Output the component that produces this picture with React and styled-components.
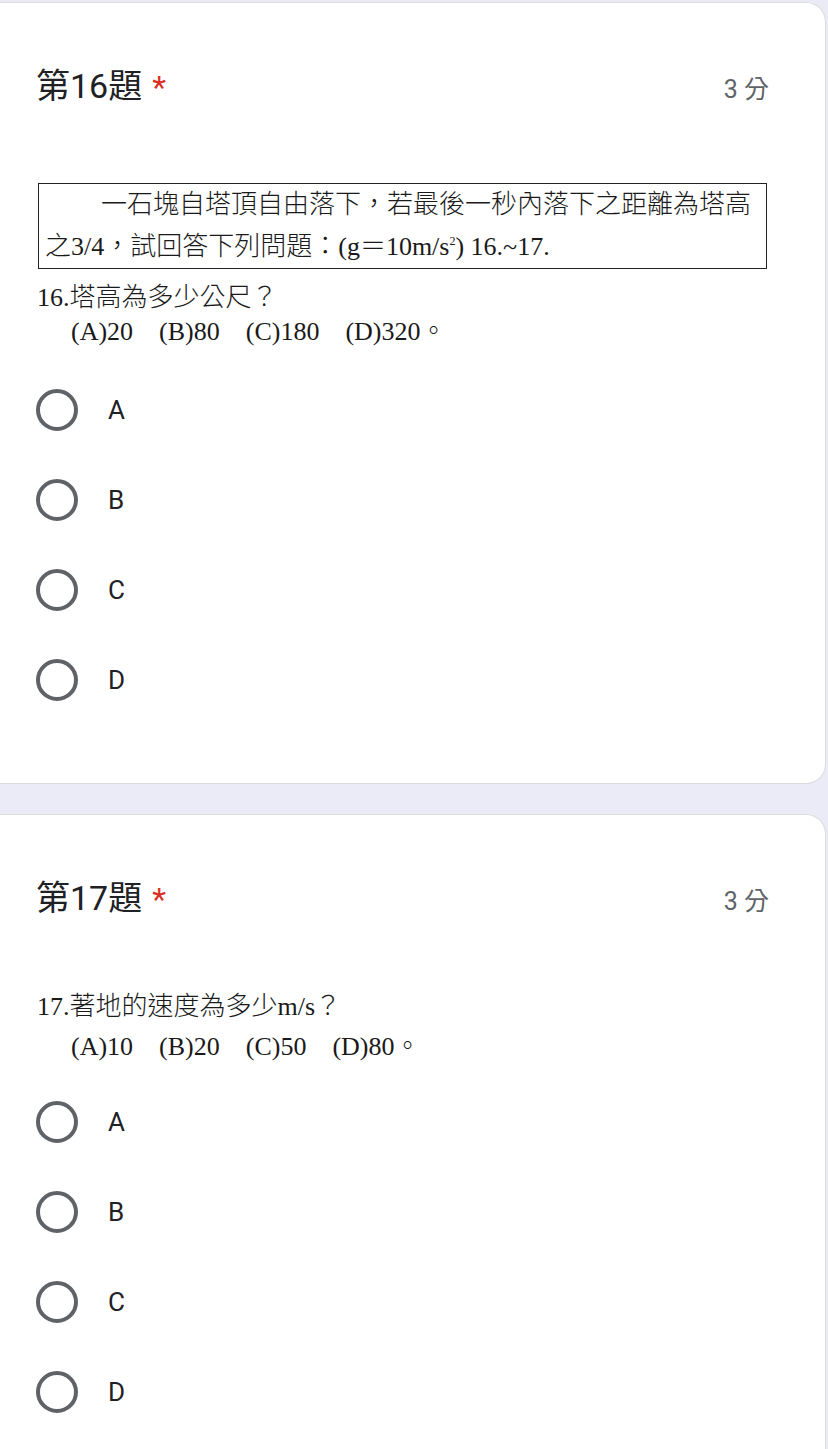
import styled, { createGlobalStyle } from 'styled-components'

const GlobalStyle = createGlobalStyle`
  body {
    margin: 0;
    background: #ebebf7;
    font-family: Roboto, "Noto Sans CJK TC", sans-serif;
  }
`

const Page = styled.div`
  display: flex;
  flex-direction: column;
  gap: 30px;
  padding: 2px 2px 0 0;
`

const Card = styled.section`
  background: #fff;
  border: 1px solid #dadce0;
  border-left: none;
  border-radius: 0 20px 20px 0;
  padding: 63px 56px 58px 36px;
`

const Header = styled.div`
  display: flex;
  justify-content: space-between;
  align-items: baseline;
`

const Title = styled.h2`
  margin: 0;
  font-size: 34px;
  line-height: 40px;
  font-weight: 400;
  color: #202124;
`

const Required = styled.span`
  color: #d93025;
  margin-left: 10px;
  font-size: 32px;
`

const Points = styled.span`
  font-size: 25px;
  color: #5f6368;
`

// scanned question picture, kept as text
const Scan = styled.div`
  margin-top: ${p => p.$top}px;
  font-family: "Liberation Serif", "Noto Sans CJK TC", serif;
  font-size: 26px;
  font-weight: 300;
  color: #1a1a1a;
`

const ScanBox = styled.div`
  width: 715px;
  margin: 0 0 12px 2px;
  border: 1.5px solid #222;
  padding: 0 6px;
  line-height: 42px;
  white-space: nowrap;
`

const Indent = styled.div`
  text-indent: 56px;
`

const Sup = styled.sup`
  font-size: 12px;
  line-height: 0;
`

const ScanLine = styled.div`
  line-height: 34px;
  margin-top: ${p => p.$gap || 0}px;
  padding-left: ${p => p.$indent || 1}px;
  white-space: nowrap;
`

const Choice = styled.span`
  margin-right: 26px;
`

const Options = styled.div`
  margin-top: ${p => p.$top}px;
  display: flex;
  flex-direction: column;
`

const OptionRow = styled.label`
  display: flex;
  align-items: center;
  height: 90px;
  gap: 30px;
  font-size: 26px;
  color: #202124;
`

const Radio = styled.span`
  width: 34px;
  height: 34px;
  border: 4px solid #5f6368;
  border-radius: 50%;
  flex: none;
`

const questions = [
  {
    no: 16,
    top: 76,
    box: true,
    gap: 0,
    optTop: 16,
    ask: '16.塔高為多少公尺？',
    choices: ['(A)20', '(B)80', '(C)180', '(D)320'],
  },
  {
    no: 17,
    top: 71,
    box: false,
    gap: 6,
    optTop: 13,
    ask: '17.著地的速度為多少m/s？',
    choices: ['(A)10', '(B)20', '(C)50', '(D)80'],
  },
]

function Question({ q }) {
  return (
    <Card>
      <Header>
        <Title>
          第{q.no}題<Required>*</Required>
        </Title>
        <Points>3 分</Points>
      </Header>
      <Scan $top={q.top}>
        {q.box && (
          <ScanBox>
            <Indent>一石塊自塔頂自由落下，若最後一秒內落下之距離為塔高</Indent>
            <div>
              之3/4，試回答下列問題：(g＝10m/s<Sup>2</Sup>) 16.~17.
            </div>
          </ScanBox>
        )}
        <ScanLine>{q.ask}</ScanLine>
        <ScanLine $indent={35} $gap={q.gap}>
          {q.choices.map((c, i) => (
            <Choice key={c}>{c}{i === q.choices.length - 1 ? '。' : ''}</Choice>
          ))}
        </ScanLine>
      </Scan>
      <Options $top={q.optTop}>
        {['A', 'B', 'C', 'D'].map(l => (
          <OptionRow key={l}>
            <Radio />
            {l}
          </OptionRow>
        ))}
      </Options>
    </Card>
  )
}

function App() {
  return (
    <>
      <GlobalStyle />
      <Page>
        {questions.map(q => (
          <Question key={q.no} q={q} />
        ))}
      </Page>
    </>
  )
}

export default App
